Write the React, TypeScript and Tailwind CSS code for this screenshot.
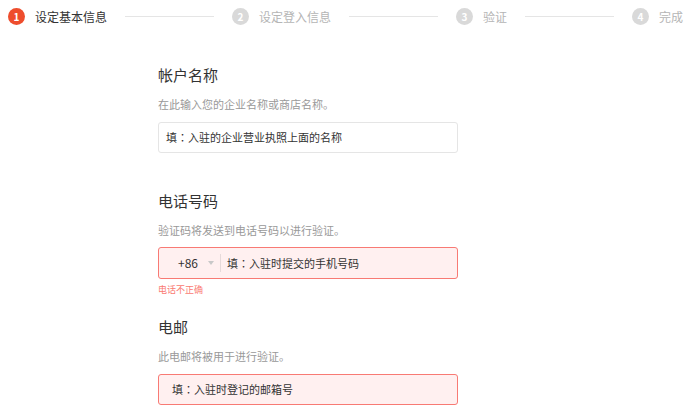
import { Fragment, ReactNode } from "react";

type Step = { num: number; label: string; active?: boolean };

const steps: Step[] = [
  { num: 1, label: "设定基本信息", active: true },
  { num: 2, label: "设定登入信息" },
  { num: 3, label: "验证" },
  { num: 4, label: "完成" },
];

const StepItem = ({ step }: { step: Step }) => (
  <div className="flex items-center shrink-0">
    <span
      className={`flex items-center justify-center w-[17px] h-[17px] rounded-full text-[10px] font-bold text-white leading-none ${
        step.active ? "bg-[#ee4d2d]" : "bg-[#d9d9d9]"
      }`}
    >
      {step.num}
    </span>
    <span
      className={`ml-[10px] text-[12px] leading-4 ${
        step.active ? "text-[#333]" : "text-[#b5b5b5]"
      }`}
    >
      {step.label}
    </span>
  </div>
);

// full-width colon centred, as in the original font
const Fill = ({ text }: { text: string }) => (
  <>
    填<span className="font-['Noto_Sans_CJK_TC',sans-serif]">：</span>
    {text}
  </>
);

const Section = ({
  title,
  desc,
  children,
  className,
}: {
  title: string;
  desc: string;
  children: ReactNode;
  className?: string;
}) => (
  <div className={className}>
    <h3 className="text-[15px] leading-5 text-[#333]">{title}</h3>
    <p className="text-[11px] leading-4 text-[#999] mt-[11px]">{desc}</p>
    {children}
  </div>
);

export default function App() {
  return (
    <div className="w-[692px] h-[411px] bg-white overflow-hidden font-['Noto_Sans_CJK_SC','Noto_Sans',sans-serif]">
      {/* steps */}
      <div className="flex items-center h-[33px] pl-2 pr-[9px]">
        {steps.map((s, i) => (
          <Fragment key={s.num}>
            <StepItem step={s} />
            {i < steps.length - 1 && (
              <div className="flex-1 h-px bg-[#e5e5e5] mx-[18px]" />
            )}
          </Fragment>
        ))}
      </div>

      <div className="ml-[158px] w-[300px]">
        <Section
          className="mt-[32px]"
          title="帐户名称"
          desc="在此输入您的企业名称或商店名称。"
        >
          <div className="mt-[10px] h-[31px] border border-[#e5e5e5] rounded-[3px] flex items-center pl-[7px] text-[11px] text-[#333]">
            <Fill text="入驻的企业营业执照上面的名称" />
          </div>
        </Section>

        <Section
          className="mt-[38px]"
          title="电话号码"
          desc="验证码将发送到电话号码以进行验证。"
        >
          <div className="mt-[9px] h-[32px] border border-[#f87a74] bg-[#fff0f0] rounded-[3px] flex items-center text-[11px] text-[#333]">
            <span className="ml-[19px] text-[12px]">+86</span>
            <span className="ml-[10px] w-0 h-0 border-l-[3px] border-r-[3px] border-t-[4px] border-l-transparent border-r-transparent border-t-[#c8c8c8]" />
            <span className="ml-[6px] w-px h-[18px] bg-[#e6dada]" />
            <span className="ml-[6px]">
              <Fill text="入驻时提交的手机号码" />
            </span>
          </div>
          <p className="mt-[5px] text-[9px] leading-3 text-[#fa7a72]">电话不正确</p>
        </Section>

        <Section className="mt-[21px]" title="电邮" desc="此电邮将被用于进行验证。">
          <div className="mt-[10px] h-[31px] border border-[#f87a74] bg-[#fff0f0] rounded-[3px] flex items-center pl-[13px] text-[11px] text-[#333]">
            <Fill text="入驻时登记的邮箱号" />
          </div>
        </Section>
      </div>
    </div>
  );
}
